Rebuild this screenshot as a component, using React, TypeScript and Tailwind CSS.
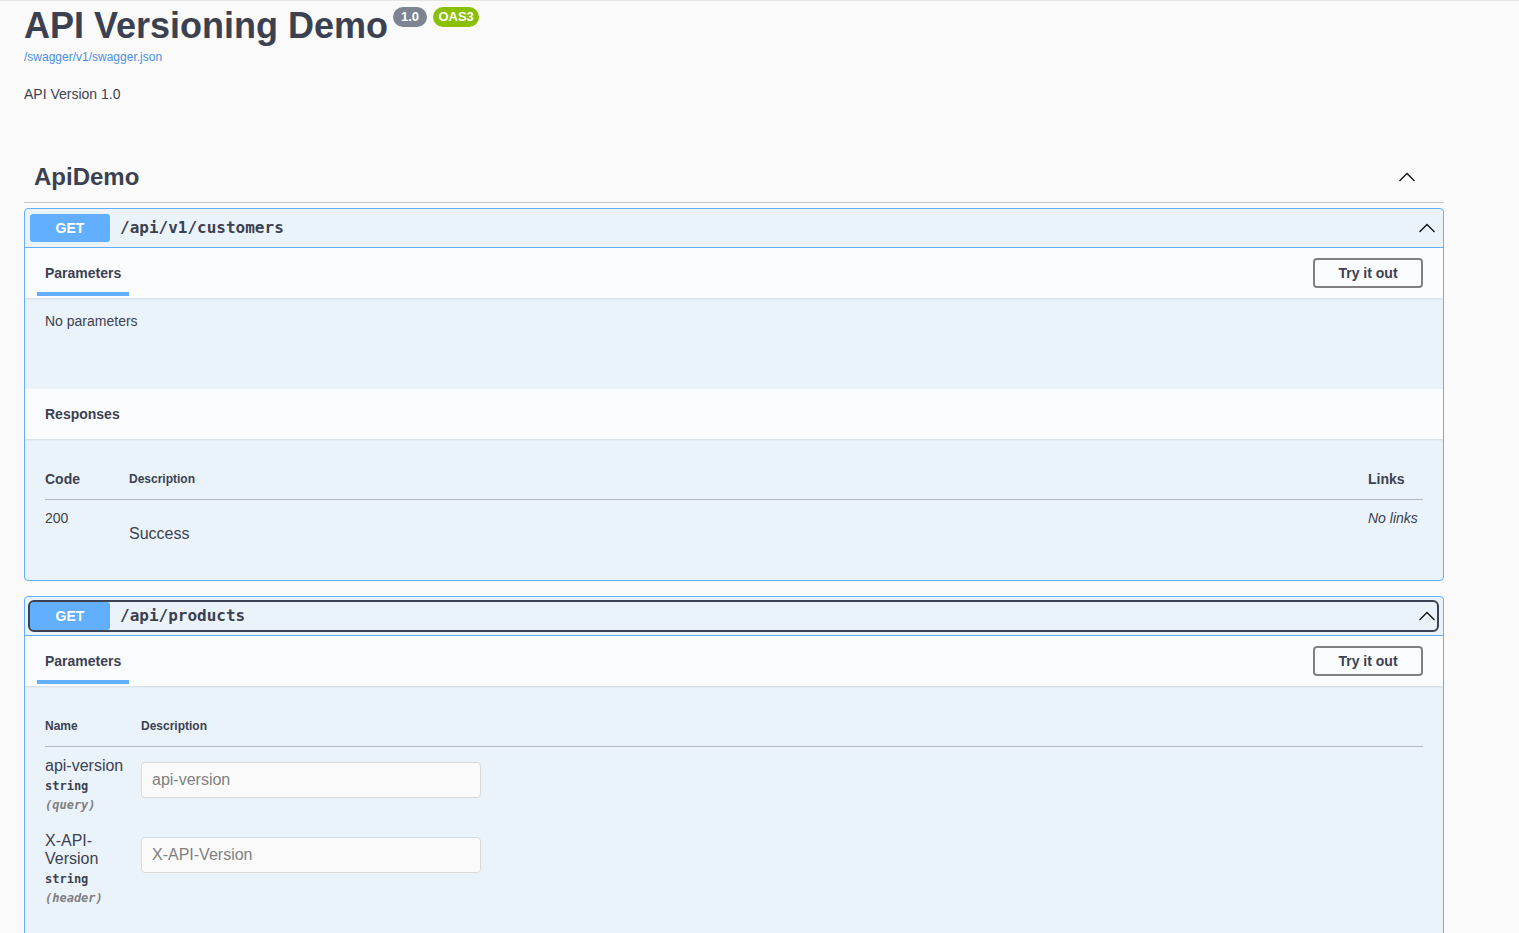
import React from "react";

const sans = { fontFamily: '"Liberation Sans", Arial, sans-serif' };

function Chevron() {
  return (
    <svg width="20" height="20" viewBox="0 0 20 20" className="shrink-0">
      <polyline points="2.5,14 10,6.5 17.5,14" fill="none" stroke="#111" strokeWidth="1.3" />
    </svg>
  );
}

function Summary({ path, focused }: { path: string; focused?: boolean }) {
  return (
    <div className="border-b border-[#61affe] py-[5px] pl-[5px] pr-[6px]">
      <div
        className={
          "flex items-center rounded-[4px] " +
          (focused ? "outline-2 outline-[#3b4151]" : "")
        }
      >
        <span className="flex h-[28px] w-[80px] items-center justify-center rounded-[3px] bg-[#61affe] text-[14px] font-bold text-white">
          GET
        </span>
        <span className="ml-[10px] flex-1 font-['DejaVu_Sans_Mono',monospace] text-[16px] font-bold text-[#3b4151]">
          {path}
        </span>
        <Chevron />
      </div>
    </div>
  );
}

function ParamHeader() {
  return (
    <div className="flex h-[50px] items-start justify-between bg-[#fbfcfe] pr-5 shadow-[0_1px_2px_rgba(0,0,0,0.1)]">
      <div className="ml-3 flex h-[48px] items-center border-b-4 border-[#61affe] px-2 pt-[6px] text-[14px] font-bold">
        Parameters
      </div>
      <button className="mt-[10px] h-[30px] w-[110px] rounded-[4px] border-2 border-[#808080] text-[14px] font-bold text-[#3b4151]">
        Try it out
      </button>
    </div>
  );
}

function Responses() {
  return (
    <>
      <div className="flex h-[50px] items-center bg-[#fbfcfe] px-5 text-[14px] font-bold shadow-[0_1px_2px_rgba(0,0,0,0.1)]">
        Responses
      </div>
      <div className="h-[141px] px-5 pt-[20px]">
        <div className="flex items-center border-b border-[#b3b7bf] py-3 leading-4">
          <div className="w-[84px] text-[14px] font-bold">Code</div>
          <div className="flex-1 text-[12px] font-bold">Description</div>
          <div className="w-[55px] text-[14px] font-bold">Links</div>
        </div>
        <div className="flex pt-[10px]">
          <div className="w-[84px] text-[14px] leading-4">200</div>
          <div className="flex-1 pt-[15px] text-[16px] leading-[18px]">Success</div>
          <div className="w-[55px] text-[14px] italic leading-4">No links</div>
        </div>
      </div>
    </>
  );
}

const params = [
  { name: "api-version", where: "(query)" },
  { name: "X-API-Version", where: "(header)" },
];

export default function App() {
  return (
    <div
      className="min-h-screen border-t border-[#e6e6e6] bg-[#fafafa] text-[#3b4151]"
      style={sans}
    >
      <div className="w-[1468px] px-6">
        {/* Info block */}
        <div className="flex items-start pt-1">
          <h2 className="text-[36px] font-bold leading-[41px]">API Versioning Demo</h2>
          <div className="ml-[5px] mt-[2px] flex gap-[6px]">
            <span className="flex h-[20px] w-[34px] items-center justify-center rounded-full bg-[#7d8492] text-[13px] font-bold text-white">
              1.0
            </span>
            <span className="flex h-[20px] w-[46px] items-center justify-center rounded-full bg-[#89bf04] text-[13px] font-bold text-white">
              OAS3
            </span>
          </div>
        </div>
        <a className="mt-1 block text-[12px] leading-[14px] text-[#4990e2]">/swagger/v1/swagger.json</a>
        <p className="mt-[22px] text-[14px] leading-4">API Version 1.0</p>

        {/* Tag */}
        <div className="mt-[50px] flex h-[51px] items-center justify-between border-b border-[#c4c5ca] pl-[10px] pr-[27px]">
          <h3 className="text-[24px] font-bold">ApiDemo</h3>
          <Chevron />
        </div>

        {/* GET /api/v1/customers */}
        <div className="mt-[5px] overflow-hidden rounded-[4px] border border-[#61affe] bg-[#ebf3fa]">
          <Summary path="/api/v1/customers" />
          <ParamHeader />
          <div className="h-[91px] px-5 pt-[15px] text-[14px] leading-4">No parameters</div>
          <Responses />
        </div>

        {/* GET /api/products */}
        <div className="mt-[15px] h-[400px] overflow-hidden rounded-t-[4px] border border-[#61affe] bg-[#ebf3fa]">
          <Summary path="/api/products" focused />
          <ParamHeader />
          <div className="px-5 pt-[20px]">
            <div className="flex items-center border-b border-[#b3b7bf] py-3 text-[12px] font-bold leading-4">
              <div className="w-[96px]">Name</div>
              <div>Description</div>
            </div>
            {params.map((p) => (
              <div key={p.name} className="flex pb-[9px] pt-[10px]">
                <div className="w-[96px] pr-1">
                  <div className="text-[16px] leading-[18px]">{p.name}</div>
                  <div className="mt-[3px] font-['DejaVu_Sans_Mono',monospace] text-[12px] font-bold leading-4">
                    string
                  </div>
                  <div className="mt-[3px] font-['DejaVu_Sans_Mono',monospace] text-[12px] font-bold italic leading-4 text-[#808080]">
                    {p.where}
                  </div>
                </div>
                <div>
                  <input
                    placeholder={p.name}
                    className="mt-[5px] h-[36px] w-[340px] rounded-[4px] border border-[#d9d9d9] bg-[#fafafa] px-[10px] text-[16px] outline-none placeholder:text-[#808080]"
                    style={sans}
                  />
                </div>
              </div>
            ))}
          </div>
        </div>
      </div>
    </div>
  );
}
